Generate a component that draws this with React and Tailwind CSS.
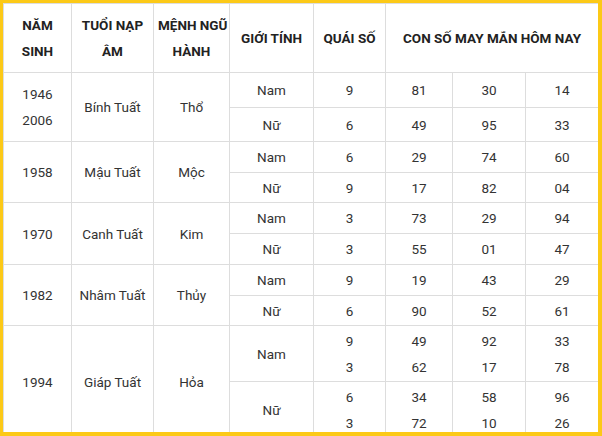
const rows = [
  {
    years: ['1946', '2006'],
    tuoi: 'Bính Tuất',
    menh: 'Thổ',
    heights: ['h-[35px]', 'h-[34px]'],
    sub: [
      { gt: 'Nam', qs: ['9'], nums: [['81', '30', '14']] },
      { gt: 'Nữ', qs: ['6'], nums: [['49', '95', '33']] },
    ],
  },
  {
    years: ['1958'],
    tuoi: 'Mậu Tuất',
    menh: 'Mộc',
    heights: ['h-[31px]', 'h-[30px]'],
    sub: [
      { gt: 'Nam', qs: ['6'], nums: [['29', '74', '60']] },
      { gt: 'Nữ', qs: ['9'], nums: [['17', '82', '04']] },
    ],
  },
  {
    years: ['1970'],
    tuoi: 'Canh Tuất',
    menh: 'Kim',
    heights: ['h-[31px]', 'h-[31px]'],
    sub: [
      { gt: 'Nam', qs: ['3'], nums: [['73', '29', '94']] },
      { gt: 'Nữ', qs: ['3'], nums: [['55', '01', '47']] },
    ],
  },
  {
    years: ['1982'],
    tuoi: 'Nhâm Tuất',
    menh: 'Thủy',
    heights: ['h-[31px]', 'h-[30px]'],
    sub: [
      { gt: 'Nam', qs: ['9'], nums: [['19', '43', '29']] },
      { gt: 'Nữ', qs: ['6'], nums: [['90', '52', '61']] },
    ],
  },
  {
    years: ['1994'],
    tuoi: 'Giáp Tuất',
    menh: 'Hỏa',
    heights: ['h-[56px]', 'h-[56px]'],
    sub: [
      { gt: 'Nam', qs: ['9', '3'], nums: [['49', '92', '33'], ['62', '17', '78']] },
      { gt: 'Nữ', qs: ['6', '3'], nums: [['34', '58', '96'], ['72', '10', '26']] },
    ],
  },
]

const cell = 'border border-[#dddddd] text-center align-middle px-1 leading-[26px]'

function Lines({ items }) {
  return items.map((t, i) => <div key={i}>{t}</div>)
}

export default function App() {
  return (
    <div className="w-[602px] h-[436px] overflow-hidden bg-white border-l-[3px] border-t-[3px] border-r-4 border-b-4 border-[#fcc917] font-['Roboto',sans-serif]">
      <table className="w-full table-fixed border-collapse text-[13.5px] text-[#333333]">
        <colgroup>
          <col className="w-[68px]" />
          <col className="w-[82px]" />
          <col className="w-[76px]" />
          <col className="w-[84px]" />
          <col className="w-[72px]" />
          <col className="w-[67px]" />
          <col className="w-[73px]" />
          <col className="w-[73px]" />
        </colgroup>
        <thead>
          <tr className="h-[69px] font-bold text-[#222222]">
            <th className={cell}>NĂM<br />SINH</th>
            <th className={cell}>TUỔI NẠP<br />ÂM</th>
            <th className={`${cell} whitespace-nowrap`}>MỆNH NGŨ<br />HÀNH</th>
            <th className={`${cell} whitespace-nowrap`}>GIỚI TÍNH</th>
            <th className={`${cell} whitespace-nowrap`}>QUÁI SỐ</th>
            <th colSpan={3} className={`${cell} whitespace-nowrap`}>CON SỐ MAY MẮN HÔM NAY</th>
          </tr>
        </thead>
        <tbody>
          {rows.map((r) =>
            r.sub.map((s, i) => (
              <tr key={r.tuoi + s.gt} className={r.heights[i]}>
                {i === 0 && (
                  <>
                    <td rowSpan={2} className={cell}><Lines items={r.years} /></td>
                    <td rowSpan={2} className={`${cell} whitespace-nowrap`}>{r.tuoi}</td>
                    <td rowSpan={2} className={cell}>{r.menh}</td>
                  </>
                )}
                <td className={cell}>{s.gt}</td>
                <td className={cell}><Lines items={s.qs} /></td>
                {[0, 1, 2].map((k) => (
                  <td key={k} className={cell}>
                    <Lines items={s.nums.map((n) => n[k])} />
                  </td>
                ))}
              </tr>
            ))
          )}
        </tbody>
      </table>
    </div>
  )
}
